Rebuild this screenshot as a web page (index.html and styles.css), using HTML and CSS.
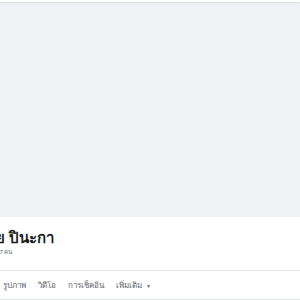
FILE: index.html
```html
<!DOCTYPE html>
<html lang="th">

<head>
    <meta charset="UTF-8">
    <meta name="viewport" content="width=device-width, initial-scale=1.0">
    <title>Profile</title>
    <link rel="stylesheet" href="styles.css">
</head>

<body>
    <div class="top-bar"></div>
    <div class="cover"></div>

    <div class="profile-info">
        <h1 class="name">สมชาย ปินะกา</h1>
        <div class="friends">เพื่อน 1,237 คน</div>
    </div>

    <div class="tabs">
        <span class="tab">รูปภาพ</span>
        <span class="tab">วิดีโอ</span>
        <span class="tab">การเช็คอิน</span>
        <span class="tab">เพิ่มเติม <span class="caret">▼</span></span>
    </div>
</body>

</html>
```

FILE: styles.css
```css
body {
    margin: 0;
    font-family: "Noto Sans", "Liberation Sans", sans-serif;
    background-color: white;
    overflow: hidden;
    width: 300px;
    height: 300px;
}

.top-bar {
    height: 2px;
    background: white;
    box-shadow: 0 1px 2px rgba(0, 0, 0, 0.08);
    position: relative;
}

.cover {
    height: 215px;
    background-color: #f0f1f5;
}

.profile-info {
    height: 52px;
    border-bottom: 1px solid #e4e6eb;
    overflow: hidden;
    padding-top: 1px;
}

.name {
    margin: 9px 0 0 -41px;
    font-size: 15px;
    font-weight: bold;
    color: #1c1e21;
    white-space: nowrap;
    line-height: 20px;
}

.friends {
    margin: 0 0 0 -28px;
    font-size: 6px;
    color: #65676b;
    white-space: nowrap;
}

.tabs {
    display: flex;
    gap: 12px;
    padding: 0 3px;
    height: 28px;
    align-items: center;
    border-bottom: 1px solid #e4e6eb;
    font-size: 8px;
    color: #65676b;
}

.caret {
    font-size: 5px;
    margin-left: 2px;
}
```
